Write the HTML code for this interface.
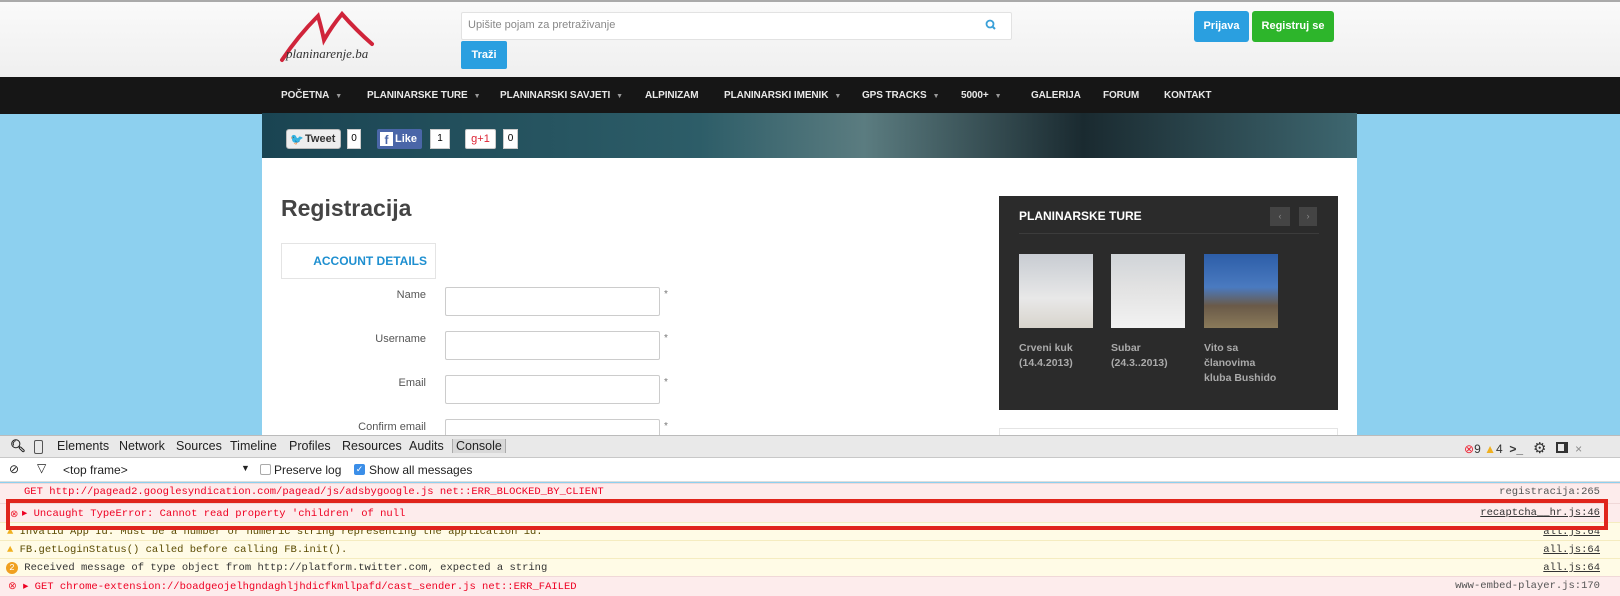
<!DOCTYPE html>
<html><head><meta charset="utf-8"><style>
*{margin:0;padding:0;box-sizing:border-box}
body{width:1620px;height:589px;overflow:hidden;font-family:"Liberation Sans",sans-serif;background:#8dd0ef;position:relative}
.abs{position:absolute}
.hdr{left:0;top:0;width:1620px;height:77px;background:linear-gradient(#fafafa,#efefef);border-top:2px solid #aaa}
.nav{left:0;top:77px;width:1620px;height:37px;background:#161616}
.nav span{position:absolute;top:13px;color:#e8e8e8;font-size:10px;font-weight:bold;letter-spacing:-.1px}
.nav i{font-style:normal;font-size:7px;color:#999;margin-left:6px}
.ban{left:262px;top:113px;width:1095px;height:45px;background:linear-gradient(90deg,#1a4452 0%,#2d5d68 40%,#5b7c80 55%,#1a2a30 75%,#3e6770 100%)}
.main{left:262px;top:158px;width:1095px;height:280px;background:#fff}
.lbl{position:absolute;font-size:11px;color:#555;text-align:right;width:160px}
.inp{position:absolute;width:215px;height:29px;border:1px solid #ccc;border-radius:2px;background:#fff}
.ast{position:absolute;font-size:10px;color:#777}
.mono{font-family:"Liberation Mono",monospace;font-size:10.5px}
.row{position:absolute;left:0;width:1620px;height:18px;border-top:1px solid #f0d8d8}
.row .t{position:absolute;left:24px;top:3px;white-space:nowrap}
.row .r{position:absolute;right:20px;top:3px;text-decoration:underline;color:#333}
</style></head><body>
<div class="abs hdr"></div>
<svg class="abs" style="left:270px;top:8px" width="120" height="58"><path d="M12 52 Q28 28 48 8 Q52 22 54 32 Q62 18 72 6 Q86 22 102 36" fill="none" stroke="#d0243a" stroke-width="4" stroke-linecap="round"/><text x="16" y="50" font-family="Liberation Serif" font-style="italic" font-size="13" fill="#333">planinarenje.ba</text></svg>
<div class="abs" style="left:461px;top:12px;width:551px;height:28px;background:#fff;border:1px solid #e2e2e2;border-radius:2px"></div>
<div class="abs" style="left:468px;top:19px;font-size:11px;color:#888">Upišite pojam za pretraživanje</div>
<svg class="abs" style="left:985px;top:19px" width="12" height="12"><circle cx="5" cy="5" r="3.5" fill="none" stroke="#3aa0d8" stroke-width="1.8"/><path d="M7.5 7.5L10 10" stroke="#3aa0d8" stroke-width="2"/></svg>
<div class="abs" style="left:461px;top:41px;width:46px;height:28px;background:#2a9fe0;border-radius:2px;color:#fff;font-size:11px;font-weight:bold;text-align:center;line-height:28px">Traži</div>
<div class="abs" style="left:1194px;top:11px;width:55px;height:31px;background:#2a9fe0;border-radius:3px;color:#fff;font-size:11px;font-weight:bold;text-align:center;line-height:31px">Prijava</div>
<div class="abs" style="left:1252px;top:11px;width:82px;height:31px;background:#2db52b;border-radius:3px;color:#fff;font-size:11px;font-weight:bold;text-align:center;line-height:31px">Registruj se</div>
<div class="abs nav">
<span style="left:281px">POČETNA<i>▼</i></span>
<span style="left:367px">PLANINARSKE TURE<i>▼</i></span>
<span style="left:500px">PLANINARSKI SAVJETI<i>▼</i></span>
<span style="left:645px">ALPINIZAM</span>
<span style="left:724px">PLANINARSKI IMENIK<i>▼</i></span>
<span style="left:862px">GPS TRACKS<i>▼</i></span>
<span style="left:961px">5000+<i>▼</i></span>
<span style="left:1031px">GALERIJA</span>
<span style="left:1103px">FORUM</span>
<span style="left:1164px">KONTAKT</span>
</div>
<div class="abs ban"></div>
<div class="abs" style="left:286px;top:129px;width:55px;height:20px;background:#eee;border:1px solid #bbb;border-radius:3px;font-size:11px;font-weight:bold;color:#333;line-height:18px;padding-left:18px">Tweet</div>
<div class="abs" style="left:290px;top:133px;color:#4ab3f4;font-size:11px">🐦</div>
<div class="abs" style="left:347px;top:129px;width:14px;height:20px;background:#fff;border:1px solid #ccc;font-size:10px;text-align:center;line-height:18px">0</div>
<div class="abs" style="left:377px;top:129px;width:45px;height:20px;background:#4a66a8;border-radius:2px;color:#fff;font-size:11px;font-weight:bold;line-height:20px;padding-left:18px">Like</div>
<div class="abs" style="left:380px;top:132px;width:13px;height:14px;background:#fff;color:#4a66a8;font-weight:bold;font-size:12px;text-align:center;line-height:16px">f</div>
<div class="abs" style="left:430px;top:129px;width:20px;height:20px;background:#fff;border:1px solid #ccc;font-size:10px;text-align:center;line-height:18px">1</div>
<div class="abs" style="left:465px;top:129px;width:31px;height:20px;background:#fff;border:1px solid #ccc;border-radius:2px;color:#d23;font-size:11px;text-align:center;line-height:18px">g+1</div>
<div class="abs" style="left:503px;top:129px;width:15px;height:20px;background:#fff;border:1px solid #ccc;font-size:10px;text-align:center;line-height:18px">0</div>
<div class="abs main"></div>
<div class="abs" style="left:281px;top:195px;font-size:23px;font-weight:bold;color:#444">Registracija</div>
<div class="abs" style="left:281px;top:243px;width:155px;height:36px;border:1px solid #e4e4e4;color:#1e8fd0;font-size:12px;font-weight:bold;text-align:right;padding-right:8px;line-height:34px">ACCOUNT DETAILS</div>
<div class="lbl" style="left:266px;top:289px">Name</div><div class="inp" style="left:445px;top:287px"></div><div class="ast" style="left:664px;top:289px">*</div>
<div class="lbl" style="left:266px;top:333px">Username</div><div class="inp" style="left:445px;top:331px"></div><div class="ast" style="left:664px;top:333px">*</div>
<div class="lbl" style="left:266px;top:377px">Email</div><div class="inp" style="left:445px;top:375px"></div><div class="ast" style="left:664px;top:377px">*</div>
<div class="lbl" style="left:266px;top:421px">Confirm email</div><div class="inp" style="left:445px;top:419px"></div><div class="ast" style="left:664px;top:421px">*</div>
<div class="abs" style="left:999px;top:196px;width:339px;height:214px;background:#2b2b2b"></div>
<div class="abs" style="left:1019px;top:209px;color:#fff;font-size:12px;font-weight:bold">PLANINARSKE TURE</div>
<div class="abs" style="left:1019px;top:233px;width:300px;height:1px;background:#3c3c3c"></div>
<div class="abs" style="left:1270px;top:207px;width:20px;height:19px;background:#444;color:#888;font-size:9px;text-align:center;line-height:19px">‹</div>
<div class="abs" style="left:1299px;top:207px;width:18px;height:19px;background:#444;color:#888;font-size:9px;text-align:center;line-height:19px">›</div>
<div class="abs" style="left:1019px;top:254px;width:74px;height:74px;background:linear-gradient(#c8ccd2,#e8e8e8 60%,#d8d4cc)"></div>
<div class="abs" style="left:1111px;top:254px;width:74px;height:74px;background:linear-gradient(#d0d4d8,#e2e2e2 45%,#f2f2f2)"></div>
<div class="abs" style="left:1204px;top:254px;width:74px;height:74px;background:linear-gradient(#2d5ea8,#4a7ac0 45%,#6a5a48 70%,#8a7a5a)"></div>
<div class="abs" style="left:1019px;top:341px;color:#aaa;font-size:10.5px;font-weight:bold;line-height:15px">Crveni kuk<br>(14.4.2013)</div>
<div class="abs" style="left:1111px;top:341px;color:#aaa;font-size:10.5px;font-weight:bold;line-height:15px">Subar<br>(24.3..2013)</div>
<div class="abs" style="left:1204px;top:341px;color:#aaa;font-size:10.5px;font-weight:bold;line-height:15px;height:47px;overflow:hidden">Vito sa<br>članovima<br>kluba Bushido<br>(21.12.12)</div>
<div class="abs" style="left:999px;top:428px;width:339px;height:10px;border:1px solid #e4e4e4;background:#fff"></div>
<div class="abs" style="left:0;top:435px;width:1620px;height:23px;background:#e9e9e9;border-top:1px solid #bbb;border-bottom:1px solid #c8c8c8"></div>
<div class="abs" style="left:0;top:439px;font-size:12.5px;color:#222;white-space:nowrap">
<span style="position:absolute;left:10px;font-weight:bold">🔍︎</span>
<span style="position:absolute;left:34px;top:1px;width:9px;height:14px;border:1.5px solid #555;border-radius:2px"></span>
<span style="position:absolute;left:57px">Elements</span><span style="position:absolute;left:119px">Network</span><span style="position:absolute;left:176px">Sources</span><span style="position:absolute;left:230px">Timeline</span><span style="position:absolute;left:289px">Profiles</span><span style="position:absolute;left:342px">Resources</span><span style="position:absolute;left:409px">Audits</span><span style="position:absolute;left:452px;border-left:1px solid #aaa;border-right:1px solid #aaa;padding:0 3px;background:#d8d8d8">Console</span>
</div>
<div class="abs" style="left:1464px;top:439px;font-size:12px;color:#333;white-space:nowrap"><span style="color:#e23">⊗</span>9 <span style="color:#f0b020">▲</span>4 &nbsp;<b>&gt;_</b> &nbsp;&nbsp;<span style="font-size:15px">⚙</span> &nbsp;&nbsp;<span style="display:inline-block;width:12px;height:11px;border:2px solid #333;border-right-width:4px"></span> &nbsp;<span style="color:#888">×</span></div>
<div class="abs" style="left:0;top:458px;width:1620px;height:24px;background:#fff;border-bottom:1px solid #ddd;font-size:12px;color:#222;white-space:nowrap">
<span style="position:absolute;left:9px;top:4px">⊘</span><span style="position:absolute;left:37px;top:3px">▽</span><span style="position:absolute;left:63px;top:5px">&lt;top frame&gt;</span><span style="position:absolute;left:241px;top:5px;font-size:9px">▼</span>
<span style="position:absolute;left:260px;top:6px;width:11px;height:11px;border:1px solid #aaa;border-radius:2px"></span><span style="position:absolute;left:274px;top:5px">Preserve log</span>
<span style="position:absolute;left:354px;top:6px;width:11px;height:11px;background:#3b8ee8;border-radius:2px;color:#fff;font-size:9px;line-height:11px;text-align:center">✓</span><span style="position:absolute;left:369px;top:5px">Show all messages</span>
</div>
<div class="row mono" style="top:483px;background:#fdecec;color:#e02;height:20px"><span class="t" style="top:2px">GET http://pagead2.googlesyndication.com/pagead/js/adsbygoogle.js net::ERR_BLOCKED_BY_CLIENT</span><span class="r" style="top:2px;color:#555;text-decoration:none">registracija:265</span></div>
<div class="row mono" style="top:503px;background:#fdecec;color:#e02;height:19px"><span class="t" style="left:22px">▸ Uncaught TypeError: Cannot read property 'children' of null</span><span class="r">recaptcha__hr.js:46</span></div>
<div class="row mono" style="top:522px;background:#fffbe6;color:#5a4a00;border-top-color:#f5ecc0"><span class="t" style="left:7px;top:3px"><span style="color:#f0b020">▲</span> Invalid App Id: Must be a number or numeric string representing the application id.</span><span class="r" style="top:3px">all.js:64</span></div>
<div class="row mono" style="top:540px;background:#fffbe6;color:#5a4a00;border-top-color:#f5ecc0"><span class="t" style="left:7px"><span style="color:#f0b020">▲</span> FB.getLoginStatus() called before calling FB.init().</span><span class="r">all.js:64</span></div>
<div class="row mono" style="top:558px;background:#fffbe6;color:#333;border-top-color:#f5ecc0"><span class="t" style="left:6px"><span style="display:inline-block;width:12px;height:12px;border-radius:6px;background:#f0a020;color:#fff;font-size:9px;text-align:center;line-height:12px">2</span> Received message of type object from http://platform.twitter.com, expected a string</span><span class="r">all.js:64</span></div>
<div class="row mono" style="top:576px;background:#fdecec;color:#e02;height:20px"><span class="t" style="left:8px"><span style="color:#e23">⊗</span> ▸ GET chrome-extension://boadgeojelhgndaghljhdicfkmllpafd/cast_sender.js net::ERR_FAILED</span><span class="r" style="color:#555;text-decoration:none">www-embed-player.js:170</span></div>
<div class="abs" style="left:6px;top:499px;width:1602px;height:31px;border:4px solid #e0241c"></div>
<div class="abs" style="left:10px;top:509px;color:#e23;font-size:10px">⊗</div>
</body></html>
